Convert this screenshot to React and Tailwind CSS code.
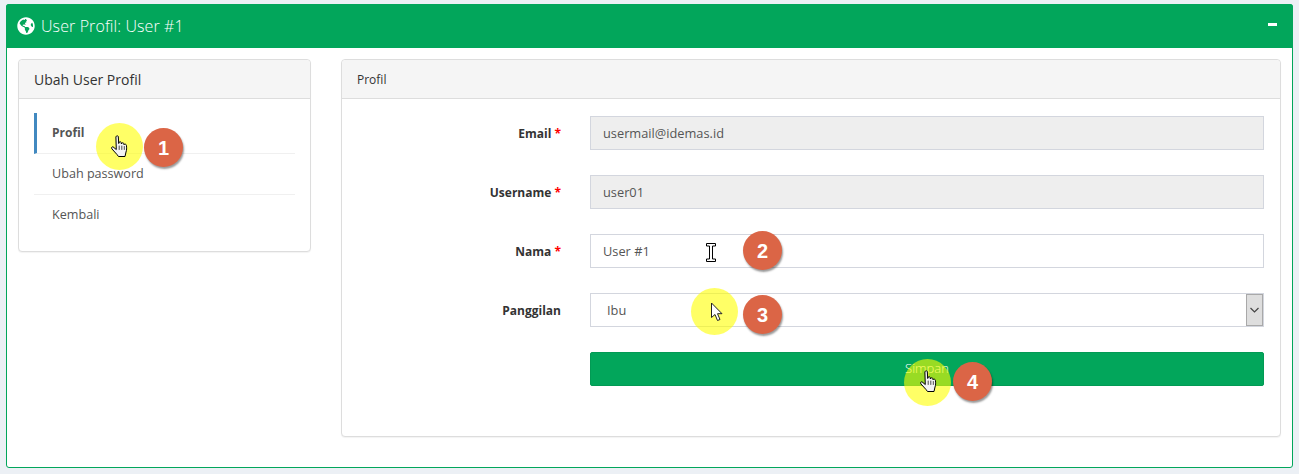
import React from 'react';
import { FaGlobeAmericas } from 'react-icons/fa';

const fields = [
  { label: 'Email', value: 'usermail@idemas.id', required: true, disabled: true },
  { label: 'Username', value: 'user01', required: true, disabled: true },
  { label: 'Nama', value: 'User #1', required: true },
];

const menu = ['Profil', 'Ubah password', 'Kembali'];

const Hand = ({ className }) => (
  <svg className={className} viewBox="0 0 18 24" fill="#fff" stroke="#000" strokeWidth="1" strokeLinejoin="round" strokeLinecap="round">
    <path d="M5 1.500c.3-1 2-1 2.300 0l.4 7 .6-1.500c.7-.6 1.700-.3 1.900.6l.2 1.400.5-1c.8-.5 1.700-.2 1.900.6l.2 1.200.4-.5c.8-.4 1.900 0 2 1 .4 2.500.3 5-.4 6.700l-1 4.500H7.500L6 19.500 1 14c-.9-1.100-.2-2.500 1-2.200l3 2.500z" fill="#f4f4f4" />
    <path d="M8.200 11v3.500M10.800 11v3.500M13.300 11.500v3" fill="none" strokeWidth="0.700" />
  </svg>
);

const Arrow = ({ className }) => (
  <svg className={className} viewBox="0 0 14 21" fill="#fff" stroke="#222" strokeWidth="1" strokeLinejoin="round">
    <path d="M1.500 1v14.500l3.500-3 2.500 6 2.500-1-2.500-5.800h4.500z" />
  </svg>
);

const IBeam = ({ className }) => (
  <svg className={className} viewBox="0 0 10 19" fill="#fff" stroke="#000" strokeWidth="1">
    <path d="M.5.500h9v2.500h-3v13h3v2.500h-9V16h3V3h-3z" />
  </svg>
);

const Badge = ({ n, className }) => (
  <div className={`absolute flex h-[39px] w-[39px] items-center justify-center rounded-full bg-[#db6546] font-['Liberation_Sans',sans-serif] text-[20px] font-bold text-white shadow-[1px_2px_2px_rgba(0,0,0,0.4)] ${className}`}>
    {n}
  </div>
);

const Spot = ({ className }) => (
  <div className={`absolute h-[47px] w-[47px] rounded-full bg-[#ffff00]/60 ${className}`} />
);

const Card = ({ title, titleClass, className, children }) => (
  <div className={`rounded-[4px] border border-[#dddddd] bg-white shadow-[0_1px_1px_rgba(0,0,0,0.05)] ${className}`}>
    <div className={`flex h-[39px] items-center rounded-t-[4px] border-b border-[#dddddd] bg-[#f5f5f5] pl-[15px] text-[#333333] ${titleClass}`}>
      {title}
    </div>
    {children}
  </div>
);

const Row = ({ label, required, children }) => (
  <div className="flex h-[34px] items-center">
    <div className="w-[248px] pr-[29px] pt-[1px] text-right text-[12px] font-bold text-[#333333]">
      {label}
      {required && <span className="text-[#ff0000]"> *</span>}
    </div>
    {children}
  </div>
);

export default function App() {
  return (
    <div className="relative h-[474px] overflow-hidden bg-[#ecf0f5] px-[6px] pt-1 font-['Open_Sans',sans-serif]">
      <div className="h-[464px] rounded-[3px] border border-[#02a65b] bg-white">
        {/* Portlet header */}
        <div className="-mx-px -mt-px flex h-[44px] items-center justify-between rounded-t-[3px] bg-[#02a65b] pl-[11px] pr-[16px] text-white">
          <div className="flex items-center gap-[6px]">
            <FaGlobeAmericas className="h-[18px] w-[18px]" />
            <span className="text-[16px] font-light leading-none tracking-[0.1px]">User Profil: User #1</span>
          </div>
          <div className="mb-[3px] h-[3px] w-[9px] bg-white" />
        </div>

        <div className="flex items-start gap-[30px] px-[11px] pt-[11px]">
          {/* Left menu */}
          <Card title="Ubah User Profil" titleClass="text-[14px]" className="h-[193px] w-[293px]">
            <div className="px-[15px] pt-[14px]">
              {menu.map((item, i) => (
                <div
                  key={item}
                  className={`flex h-[41px] items-center text-[12.6px] text-[#555555] ${i === 0 ? 'border-l-[3px] border-[#4189c0] pl-[15px] text-[12px] font-bold' : 'pl-[18px]'} ${i === 2 ? '' : 'border-b border-b-[#f0f0f0]'}`}
                >
                  {item}
                </div>
              ))}
            </div>
          </Card>

          {/* Right form */}
          <Card title="Profil" titleClass="pt-[2px] text-[12px]" className="h-[378px] flex-1">
            <div className="flex flex-col gap-[25px] pt-[17px]">
              {fields.map((f) => (
                <Row key={f.label} label={f.label} required={f.required}>
                  <div className={`flex h-[34px] w-[674px] items-center border border-[#d3d6de] px-3 pt-[1px] text-[12.8px] text-[#555555] ${f.disabled ? 'bg-[#eeeeee]' : 'bg-white'}`}>
                    {f.value}
                  </div>
                </Row>
              ))}
              <Row label="Panggilan">
                <div className="flex h-[34px] w-[674px] items-center justify-between border border-[#d3d6de] bg-white pl-4 text-[12.8px] text-[#555555]">
                  <span className="pt-[1px]">Ibu</span>
                  <div className="flex h-[32px] w-[17px] items-center justify-center border border-[#a9a9a9] bg-[#dedede]">
                    <svg width="9" height="6" viewBox="0 0 9 6" fill="none" stroke="#444" strokeWidth="1.200"><path d="M.5 1l4 4 4-4" /></svg>
                  </div>
                </div>
              </Row>
              <Row>
                <div className="flex h-[34px] w-[674px] items-center justify-center rounded-[2px] border border-[#029a54] bg-[#02a65b] text-[13px] font-light text-white">
                  Simpan
                </div>
              </Row>
            </div>
          </Card>
        </div>
      </div>

      {/* Tutorial annotations */}
      <Spot className="left-[96px] top-[123px]" />
      <Hand className="absolute left-[111px] top-[135px] h-[24px] w-[18px]" />
      <Badge n="1" className="left-[144px] top-[128px]" />
      <IBeam className="absolute left-[706px] top-[243px] h-[19px] w-[10px]" />
      <Badge n="2" className="left-[743px] top-[231px]" />
      <Spot className="left-[691px] top-[288px]" />
      <Arrow className="absolute left-[710px] top-[302px] h-[21px] w-[14px]" />
      <Badge n="3" className="left-[743px] top-[295px]" />
      <Spot className="left-[904px] top-[359px]" />
      <Hand className="absolute left-[920px] top-[370px] h-[24px] w-[18px]" />
      <Badge n="4" className="left-[953px] top-[362px]" />
    </div>
  );
}
